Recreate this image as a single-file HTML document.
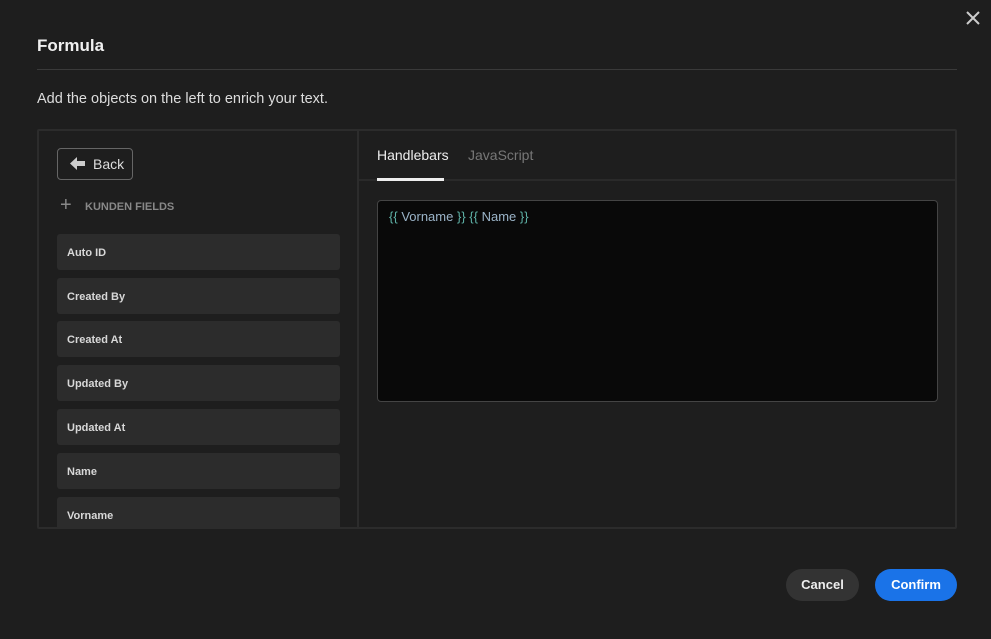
<!DOCTYPE html>
<html><head><style>
body{margin:0;width:991px;height:639px;background:#1e1e1e;font-family:"Liberation Sans",sans-serif;color:#e8e8e8;position:relative;overflow:hidden}
.a{position:absolute}
.title{left:37px;top:36px;font-size:17px;font-weight:bold;color:#f0f0f0}
.hr{left:37px;top:69px;width:920px;height:1px;background:#3a3a3a}
.sub{left:37px;top:91px;font-size:14.5px;color:#ddd}
.box{left:37px;top:129px;width:916px;height:396px;border:2px solid #2c2c2c;border-radius:2px}
.div{left:357px;top:131px;width:2px;height:396px;background:#2c2c2c}
.back{left:57px;top:148px;width:74px;height:30px;border:1px solid #666;border-radius:4px;font-size:14px;color:#ddd}
.field{left:57px;width:283px;height:36px;background:#2c2c2c;border-radius:3px;font-size:11px;font-weight:bold;color:#d8d8d8;line-height:38px;padding-left:10px;box-sizing:border-box}
.tabline{left:359px;top:179px;width:596px;height:2px;background:#2a2a2a}
.ed{left:377px;top:200px;width:561px;height:202px;background:#090909;border:1px solid #444;border-radius:4px;box-sizing:border-box;font-size:13px;padding:8px 11px;color:#9ab}
.btn{top:569px;height:32px;border-radius:16px;font-size:13px;font-weight:bold;text-align:center;line-height:32px}
</style></head><body>
<svg class="a" style="left:966px;top:11px" width="14" height="14" viewBox="0 0 14 14"><path d="M1 1L13 13M13 1L1 13" stroke="#ccc" stroke-width="2"/></svg>
<div class="a title">Formula</div>
<div class="a hr"></div>
<div class="a sub">Add the objects on the left to enrich your text.</div>
<div class="a box"></div>
<div class="a div"></div>
<div class="a back"><svg class="a" style="left:12px;top:8px" width="15" height="13" viewBox="0 0 15 13"><path d="M0 6.5L7 0V4H15V9H7V13Z" fill="#ccc"/></svg><span class="a" style="left:35px;top:7px">Back</span></div>
<div class="a" style="left:60px;top:194px;font-size:20px;color:#888">+</div>
<div class="a" style="left:85px;top:201px;font-size:11px;font-weight:bold;color:#888">KUNDEN FIELDS</div>
<div class="a field" style="top:234px">Auto ID</div>
<div class="a field" style="top:278px">Created By</div>
<div class="a field" style="top:321px">Created At</div>
<div class="a field" style="top:365px">Updated By</div>
<div class="a field" style="top:409px">Updated At</div>
<div class="a field" style="top:453px">Name</div>
<div class="a field" style="top:497px;height:30px;border-radius:3px 3px 0 0;line-height:38px">Vorname</div>
<div class="a tabline"></div>
<div class="a" style="left:377px;top:147px;font-size:14px;color:#eee">Handlebars</div>
<div class="a" style="left:377px;top:178px;width:67px;height:3px;background:#eee"></div>
<div class="a" style="left:468px;top:147px;font-size:14px;color:#777">JavaScript</div>
<div class="a ed"><span style="color:#5fb3a8">{{</span> <span style="color:#9bb4c8">Vorname</span> <span style="color:#5fb3a8">}}</span> <span style="color:#5fb3a8">{{</span> <span style="color:#9bb4c8">Name</span> <span style="color:#5fb3a8">}}</span></div>
<div class="a btn" style="left:786px;width:73px;background:#333;color:#eee">Cancel</div>
<div class="a btn" style="left:875px;width:82px;background:#1a73e8;color:#fff">Confirm</div>
</body></html>
